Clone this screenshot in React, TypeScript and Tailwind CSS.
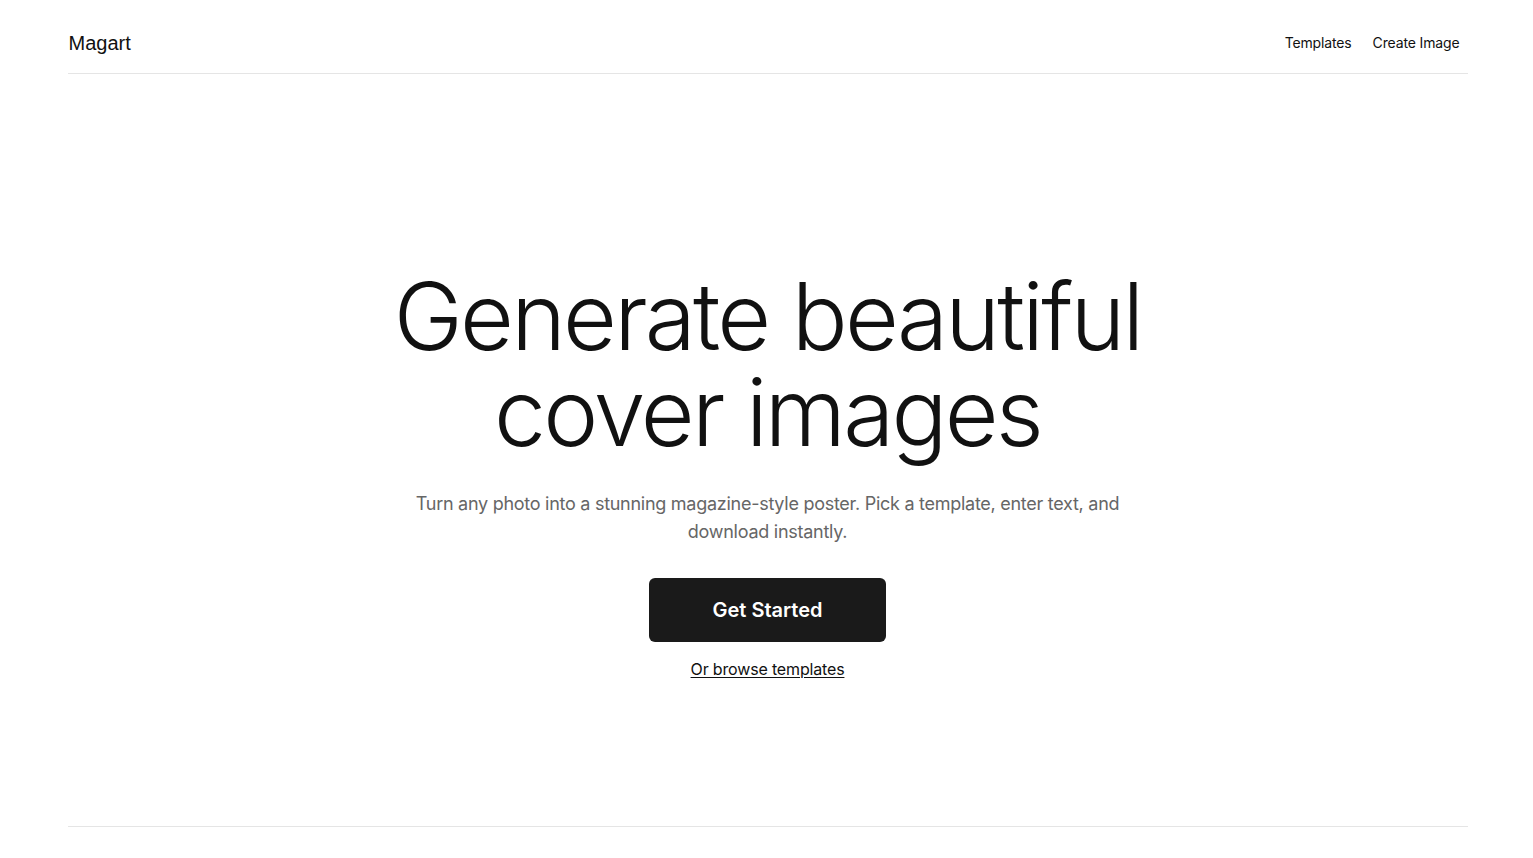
import React from "react";

export default function App() {
  return (
    <div className="min-h-screen bg-white text-[#111111]">
      <div className="mx-auto w-[1400px] translate-x-[1px]">
        <header className="flex h-[74px] items-center justify-between border-b border-[#e5e5e5] pt-[12px]">
          <div className="pl-[1px] text-[20px] leading-none text-[#111111] [font-family:'Liberation_Sans',Arial,sans-serif]">Magart</div>
          <nav className="flex items-center gap-[21px] pr-[8px] text-[14px] tracking-[-0.01em] [font-family:Inter,sans-serif]">
            <a className="text-[#111111]">Templates</a>
            <a className="text-[#111111]">Create Image</a>
          </nav>
        </header>
        <main className="flex h-[752px] flex-col items-center pt-[194px] text-center">
          <h1 className="text-[93px] font-light leading-[96px] tracking-[-0.03em] text-[#111111] [font-family:Inter,sans-serif]">
            Generate beautiful
            <br />
            cover images
          </h1>
          <p className="mt-[30px] max-w-[712px] text-[18px] leading-[28px] tracking-[-0.015em] text-[#666666] [font-family:Inter,sans-serif]">
            Turn any photo into a stunning magazine-style poster. Pick a template, enter text, and download instantly.
          </p>
          <button className="mt-[32px] flex h-[64px] w-[237px] items-center justify-center rounded-[6px] bg-[#1a1a1a] text-[20px] font-semibold text-white [font-family:Inter,sans-serif]">
            Get Started
          </button>
          <a className="mt-[15px] text-[16px] leading-[24px] tracking-[-0.01em] text-[#111111] underline underline-offset-2 [font-family:Inter,sans-serif]">
            Or browse templates
          </a>
        </main>
        <footer className="h-[40px] border-t border-[#e5e5e5]"></footer>
      </div>
    </div>
  );
}
